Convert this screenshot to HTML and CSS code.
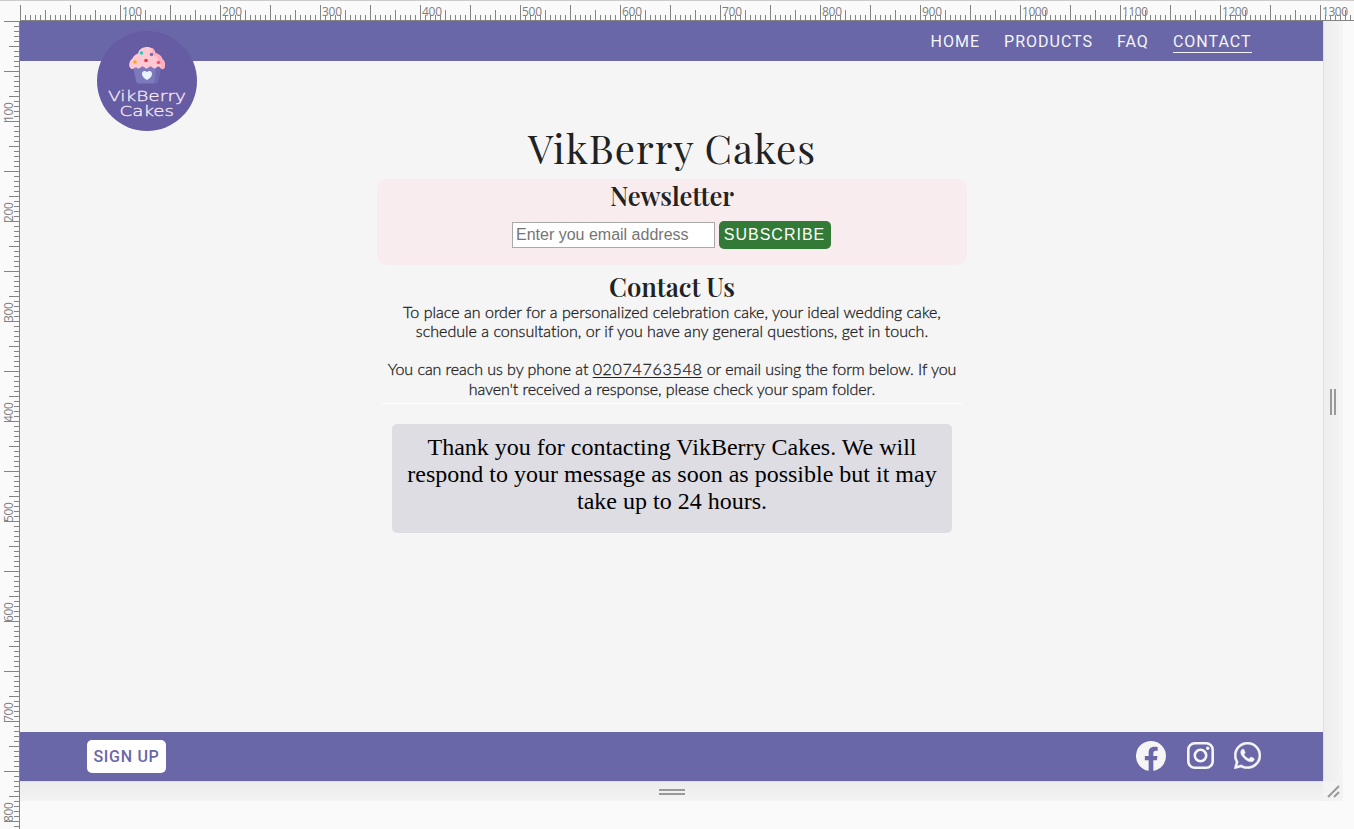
FILE: index.html
```html
<!DOCTYPE html>
<html lang="en">
<head>
<meta charset="utf-8">
<title>VikBerry Cakes - Contact</title>
<link rel="stylesheet" href="styles.css">
</head>
<body>
<div class="device">
  <svg class="ruler-top" width="1354" height="21">
    <defs>
      <pattern id="ticks-x" x="20" y="0" width="50" height="21" patternUnits="userSpaceOnUse">
        <path class="tick" d="M.5 5V20M5.5 15V20M10.5 15V20M15.5 15V20M20.5 15V20M25.5 10V20M30.5 15V20M35.5 15V20M40.5 15V20M45.5 15V20"/>
      </pattern>
    </defs>
    <rect x="20" width="1334" height="21" fill="url(#ticks-x)"/>
    <path class="tick" d="M20 20.5H1354"/>
    <path class="edge" d="M0 .5H1354"/>
    <g class="ruler-label">
      <text x="122" y="16" textLength="20">100</text><text x="222" y="16" textLength="20">200</text><text x="322" y="16" textLength="20">300</text><text x="422" y="16" textLength="20">400</text><text x="522" y="16" textLength="20">500</text><text x="622" y="16" textLength="20">600</text><text x="722" y="16" textLength="20">700</text><text x="822" y="16" textLength="20">800</text><text x="922" y="16" textLength="20">900</text><text x="1022" y="16" textLength="26">1000</text><text x="1122" y="16" textLength="26">1100</text><text x="1222" y="16" textLength="26">1200</text><text x="1322" y="16" textLength="26">1300</text>
    </g>
  </svg>
  <svg class="ruler-left" width="20" height="808">
    <defs>
      <pattern id="ticks-y" width="20" height="50" patternUnits="userSpaceOnUse">
        <path class="tick" d="M4 .5H19M14 5.5H19M14 10.5H19M14 15.5H19M14 20.5H19M9 25.5H19M14 30.5H19M14 35.5H19M14 40.5H19M14 45.5H19"/>
      </pattern>
    </defs>
    <rect width="20" height="808" fill="url(#ticks-y)"/>
    <path class="tick" d="M19.5 0V808"/>
    <g class="ruler-label">
      <text transform="translate(13 101) rotate(-90)" textLength="20">100</text><text transform="translate(13 201) rotate(-90)" textLength="20">200</text><text transform="translate(13 301) rotate(-90)" textLength="20">300</text><text transform="translate(13 401) rotate(-90)" textLength="20">400</text><text transform="translate(13 501) rotate(-90)" textLength="20">500</text><text transform="translate(13 601) rotate(-90)" textLength="20">600</text><text transform="translate(13 701) rotate(-90)" textLength="20">700</text><text transform="translate(13 801) rotate(-90)" textLength="20">800</text>
    </g>
  </svg>
  <div class="stage">
    <div class="page">
      <header class="header">
        <a class="logo">
          <svg width="100" height="100" viewBox="0 0 100 100">
            <circle cx="50" cy="50" r="50" fill="#655ca3"/>
            <path d="M36 36H64L61 50Q60.5 52.500 58 52.500H42Q39.500 52.500 39 50Z" fill="#7d79bd"/>
            <path d="M59 36H64L61 50Q60.500 52.500 57 52.500L58 48Z" fill="#6f6ab0"/>
            <path d="M34 37.500C31 36 32 29.500 35.500 27.500C36 25.500 38 23.500 41 22.500C42 18 46 16 50 16C54.500 16 57.500 18.500 58.500 22C62 23 64.500 25 65 27.500C68 29.500 69 35 67 37.500Q65.500 39 63.500 37Q61.500 34.500 59.500 36.500Q57.500 38.500 55.500 36.500Q53.500 34.500 51.500 36.500Q49.500 38.500 47.500 36.500Q45.500 34.500 43.500 36.500Q41.500 38.500 39.500 36.500Q37.500 36 36.500 37.500Q35 38.500 34 37.500Z" fill="#ffc8d2"/>
            <path d="M55 17C58 18.500 58 21 58.500 22C62 23 64.500 25 65 27.500C68 29.500 69 35 67 37.500Q65.500 39 63.500 37C65 31 61 30 60 26C56 25 55 21 55 17Z" fill="#ffaebc"/>
            <circle cx="44.500" cy="22" r="1.800" fill="#22cdbd"/>
            <circle cx="54.500" cy="23.500" r="1.800" fill="#7272b5"/>
            <circle cx="49" cy="29.500" r="1.800" fill="#ef353c"/>
            <circle cx="38" cy="31" r="1.800" fill="#ffa51e"/>
            <circle cx="61.500" cy="31.500" r="1.800" fill="#ff4f7b"/>
            <path d="M50 49C47 47.500 45 45.500 45 42.800C45 39.500 48.500 39 50 41.300C51.500 39 55 39.500 55 42.800C55 45.500 53 47.500 50 49Z" fill="#e9f4ff"/>
            <g class="logo-text"><text x="11" y="70" textLength="78" lengthAdjust="spacingAndGlyphs">VikBerry</text><text x="22.500" y="84.500" textLength="54.500" lengthAdjust="spacingAndGlyphs">Cakes</text></g>
          </svg>
        </a>
        <nav class="nav"><a>HOME</a><a>PRODUCTS</a><a>FAQ</a><a class="active">CONTACT</a></nav>
      </header>
      <main class="content">
        <h1 class="title">VikBerry Cakes</h1>
        <section class="newsletter">
          <h2 class="subtitle">Newsletter</h2>
          <form class="signup-form"><input class="email" type="email" placeholder="Enter you email address"><button class="subscribe" type="button">SUBSCRIBE</button></form>
        </section>
        <section class="contact">
          <h2 class="subtitle">Contact Us</h2>
          <p>To place an order for a personalized celebration cake, your ideal wedding cake,<br>schedule a consultation, or if you have any general questions, get in touch.</p>
          <p class="reach">You can reach us by phone at <a class="phone">02074763548</a> or email using the form below. If you<br>haven't received a response, please check your spam folder.</p>
        </section>
        <div class="notice">Thank you for contacting VikBerry Cakes. We will<br>respond to your message as soon as possible but it may<br>take up to 24 hours.</div>
      </main>
      <footer class="footer">
        <a class="sign-up">SIGN UP</a>
        <div class="social">
          <svg width="30" height="30" viewBox="0 0 30 30"><path fill="#f5f5f5" d="M30 15A15 15 0 1 0 12.650 29.820V19.330H8.850V15H12.650V11.700C12.650 7.940 14.890 5.860 18.320 5.860C19.960 5.860 21.680 6.150 21.680 6.150V9.840H19.790C17.920 9.840 17.340 11 17.340 12.190V15H21.500L20.840 19.330H17.340V29.820A15 15 0 0 0 30 15Z"/></svg>
          <svg class="instagram" width="27" height="27" viewBox="0 0 27 27"><rect x="1.300" y="1.300" width="24.400" height="24.400" rx="6.500" fill="none" stroke="#f5f5f5" stroke-width="2.600"/><circle cx="13.500" cy="13.500" r="5.700" fill="none" stroke="#f5f5f5" stroke-width="2.600"/><circle cx="20.700" cy="6.300" r="1.700" fill="#f5f5f5"/></svg>
          <svg class="whatsapp" width="27" height="27" viewBox="0 0 448 448"><path fill="#f5f5f5" stroke="#f5f5f5" stroke-width="6" d="M380.900 65.100C339 23.100 283.200 0 223.900 0 101.500 0 1.900 99.600 1.900 222c0 39.100 10.200 77.300 29.600 111L0 448l117.700-30.900c32.400 17.700 68.900 27 106.100 27h.1c122.300 0 224.100-99.600 224.100-222 0-59.300-25.200-115-67.100-157zm-157 341.600c-33.200 0-65.700-8.900-94-25.700l-6.700-4-69.800 18.300L72 327.200l-4.400-7c-18.500-29.400-28.200-63.300-28.200-98.200 0-101.700 82.800-184.500 184.600-184.500 49.300 0 95.600 19.200 130.400 54.100 34.800 34.900 56.200 81.200 56.100 130.500 0 101.800-84.900 184.600-186.600 184.600zm101.200-138.200c-5.500-2.800-32.800-16.200-37.900-18-5.100-1.900-8.800-2.800-12.500 2.800-3.700 5.600-14.300 18-17.600 21.800-3.200 3.700-6.500 4.200-12 1.400-32.600-16.300-54-29.100-75.500-66-5.700-9.800 5.700-9.100 16.300-30.300 1.800-3.700.9-6.900-.5-9.700-1.400-2.800-12.500-30.100-17.100-41.200-4.500-10.800-9.100-9.300-12.500-9.500-3.200-.2-6.900-.2-10.600-.2-3.700 0-9.700 1.400-14.800 6.900-5.100 5.600-19.400 19-19.400 46.300 0 27.300 19.900 53.700 22.600 57.400 2.800 3.700 39.100 59.700 94.800 83.800 35.200 15.200 49 16.500 66.600 13.900 10.700-1.600 32.800-13.400 37.400-26.400 4.600-13 4.600-24.100 3.200-26.400-1.300-2.500-5-3.900-10.500-6.600z"/></svg>
        </div>
      </footer>
    </div>
    <div class="handle-right"><span class="grip-v"></span></div>
    <div class="handle-bottom"><span class="grip-h"></span></div>
    <div class="handle-corner"><svg width="13" height="13"><path d="M1 12L12 1M7 12L12 7" fill="none" stroke="#999" stroke-width="2"/></svg></div>
  </div>
</div>
</body>
</html>
```
FILE: styles.css
```css
* { box-sizing: border-box; }
body { margin: 0; height: 829px; overflow: hidden; background: #fafafa; }
svg { display: block; }
h1, h2, p { margin: 0; }
.device { display: grid; grid-template: 21px 808px / 20px 1334px; }
.ruler-top { grid-column: 1 / 3; }
.tick { fill: none; stroke: #848484; stroke-width: 1; }
.edge { fill: none; stroke: #ccc; }
.ruler-label { font: 400 12px "Open Sans", "Noto Sans", sans-serif; fill: #808080; }

.stage { display: grid; grid-template: 760px 20px / 1303px 20px; align-content: start; }
.page {
  display: flex; flex-direction: column; z-index: 1; background: #f5f5f5;
}
.handle-right, .handle-bottom, .handle-corner { display: flex; align-items: center; justify-content: center; background: #f3f3f3; }
.handle-right { padding: 2px 2px 0 0; border-left: 1px solid #dedede; background: linear-gradient(90deg, #ededed, #f4f4f4); }
.handle-bottom { border-top: 1px solid #dedede; background: linear-gradient(#ececec, #f3f3f3); }
.grip-v { width: 6px; height: 26px; border: solid #999; border-width: 0 2px; }
.grip-h { width: 26px; height: 6px; border: solid #999; border-width: 2px 0; }

.header { display: flex; justify-content: space-between; height: 40px; padding: 0 71.5px 0 77px; background: #6a67a8; flex: none; }
.logo { height: 100px; padding-top: 10px; }
.logo-text { font: 200 14.5px "DejaVu Sans", sans-serif; fill: #f5e9f5; stroke: #f5e9f5; stroke-width: .3; }
.nav { display: flex; align-items: flex-start; gap: 24px; padding-top: 10px; font: 16px/21px Roboto, sans-serif; letter-spacing: 1px; color: #f5f5f5; }
.nav .active { border-bottom: 1px solid #f5f5f5; }

.content { flex: 1; width: 590px; margin-left: 357px; text-align: center; color: #222; }
.title { padding-top: 62px; height: 118px; font: 400 40px/50px "Playfair Display", "Liberation Serif", serif; letter-spacing: 1px; }
.newsletter { height: 86px; border-radius: 10px; background: #f8ecee; }
.subtitle { font: 600 25.6px/32px "Playfair Display", "Liberation Serif", serif; }
.signup-form { display: flex; justify-content: center; align-items: center; gap: 4px; padding: 10px 2px 0 0; }
.email { width: 203px; height: 26px; padding: 0 3.5px; border: 1px solid #a9a9a9; font: 16px "Liberation Sans", sans-serif; background: #fff; }
.email::placeholder { color: #757575; }
.subscribe { width: 112px; height: 28px; padding: 0; border: 0; border-radius: 5px; font: 16px "Liberation Sans", sans-serif; letter-spacing: 1px; color: #fff; background: #337a36; }
.contact { height: 139px; margin: 0 5px; padding-top: 5px; border-bottom: 1px solid #fff; }
.contact p { margin-bottom: 19px; font: 300 16px/19.200px Lato, sans-serif; letter-spacing: .02px; white-space: nowrap; -webkit-text-stroke: .3px #222; }
.contact .reach { letter-spacing: -.05px; }
.contact .phone { letter-spacing: .7px; text-decoration: underline; text-underline-offset: 2px; }
.notice { width: 560px; height: 109px; margin: 20px 15px 0; padding-top: 10px; border-radius: 5px; background: #dedde3; font: 24px/27px "Liberation Serif", serif; color: #000; }

.footer { display: flex; justify-content: space-between; align-items: center; height: 49px; padding: 0 62px 0 67px; background: #6a67a8; flex: none; }
.sign-up { width: 79px; height: 33px; border-radius: 5px; background: #fff; text-align: center; font: 500 16px/33px Roboto, sans-serif; letter-spacing: .7px; color: #6a67a8; }
.social { display: flex; align-items: center; padding-bottom: 2px; }
.instagram { margin-left: 21px; }
.whatsapp { margin-left: 20px; }
```
